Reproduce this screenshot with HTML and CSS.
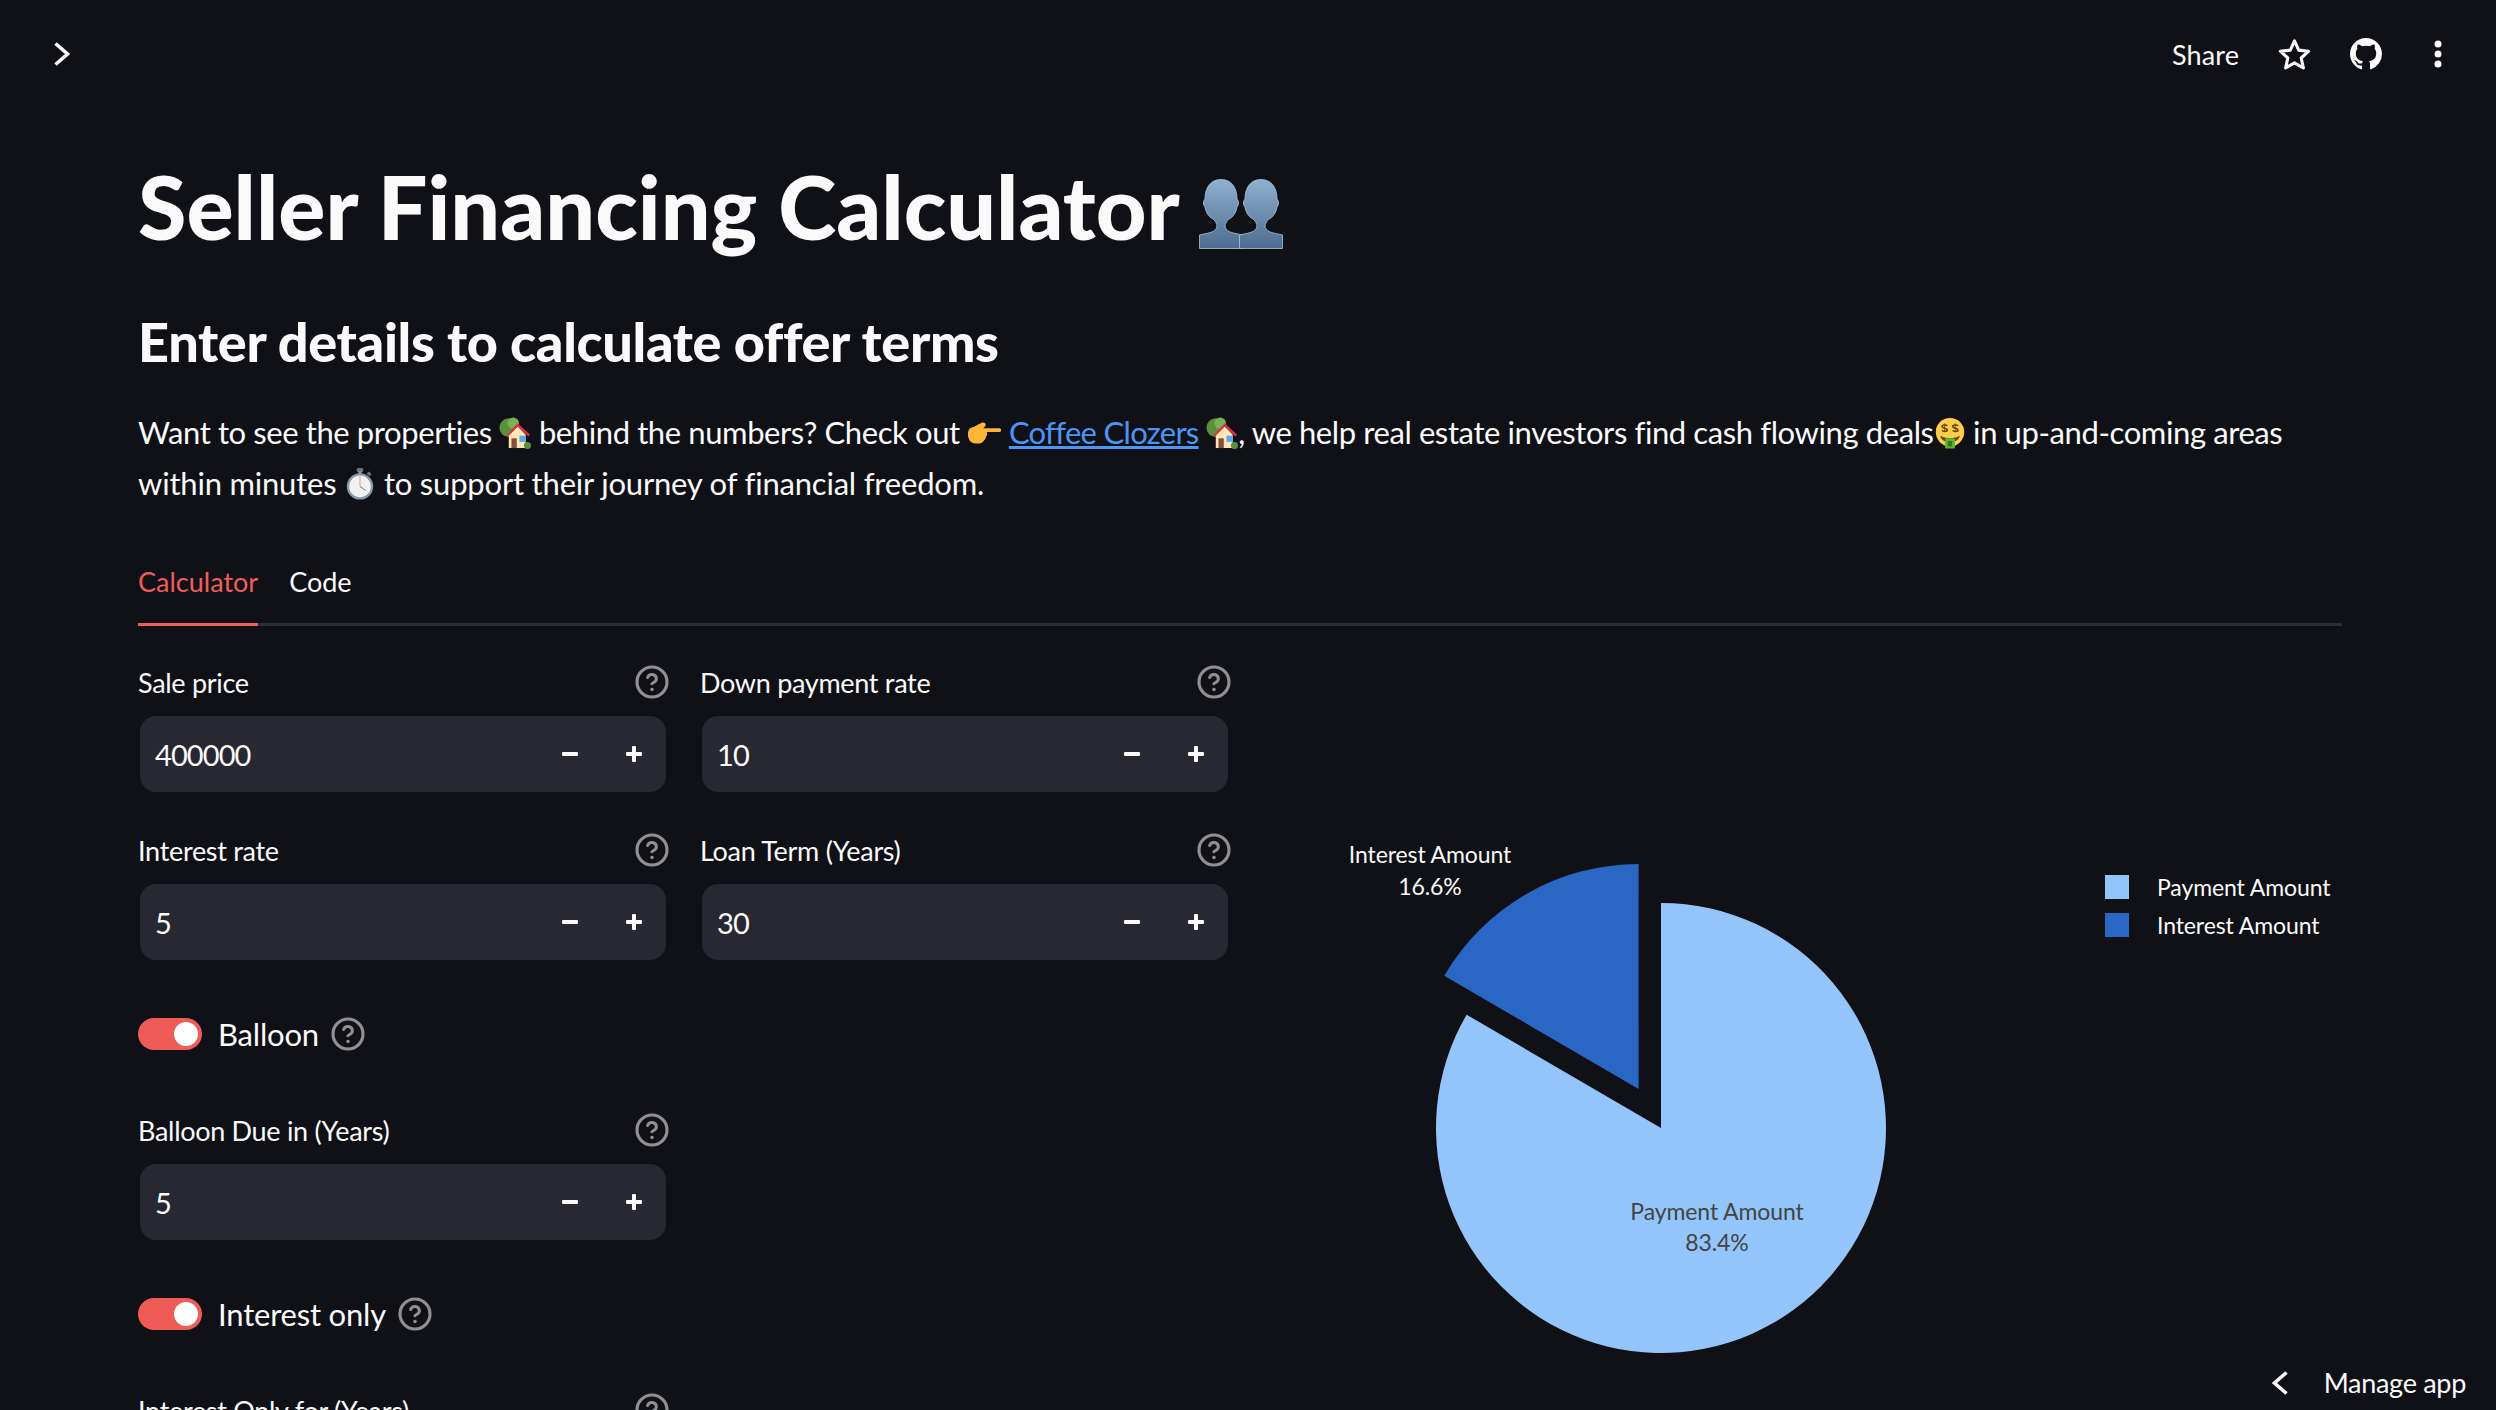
FILE: index.html
```html
<!DOCTYPE html>
<html lang="en">
<head>
  <meta charset="UTF-8" />
  <title>Seller Financing Calculator</title>
  <link rel="stylesheet" href="styles.css">
</head>
<body>
  <!-- shared icons -->
  <svg class="defs" aria-hidden="true">
    <symbol id="help" viewBox="0 0 24 24">
      <circle cx="12" cy="12" r="10" fill="none" stroke="currentColor" stroke-width="2.1"/>
      <path d="M9.09 9a3 3 0 0 1 5.830 1c0 2-3 2.600-3 3.200" fill="none" stroke="currentColor" stroke-width="2" stroke-linecap="round"/>
      <circle cx="12" cy="17" r="1.200" fill="currentColor"/>
    </symbol>
    <symbol id="minus" viewBox="0 0 18 18"><rect x="1" y="7" width="16" height="4" rx="1" fill="currentColor"/></symbol>
    <symbol id="plus" viewBox="0 0 18 18"><rect x="1" y="7" width="16" height="4" rx="1" fill="currentColor"/><rect x="7" y="1" width="4" height="16" rx="1" fill="currentColor"/></symbol>
    <symbol id="house" viewBox="0 0 36 36">
      <circle cx="11" cy="12" r="10.500" fill="#5c913b"/>
      <circle cx="16" cy="7" r="6.500" fill="#77b255"/>
      <path d="M11 20l10-10 9 10v15H11z" fill="#ffe8b6"/>
      <path d="M8 21L21 7l14 13-2 2-12-11-11 11z" fill="#dd2e44"/>
      <rect x="14" y="24" width="6" height="11" fill="#8a4b38"/>
      <rect x="23" y="21" width="7" height="7" fill="#55acee"/>
      <circle cx="32" cy="32" r="4" fill="#5c913b"/>
    </symbol>
    <symbol id="point" viewBox="0 0 36 24">
      <path d="M1 13c0-5 3-7 7-8l8-4c3-1 5 2 3 4l-2 2h17c3 0 3 4 0 4H21c1 2 0 4-1 5 0 2-1 3-2 4-1 2-3 3-5 3H9c-5 0-8-4-8-10z" fill="#ffb636"/>
    </symbol>
    <symbol id="money" viewBox="0 0 36 36">
      <circle cx="18" cy="17" r="16" fill="#ffcc4d"/>
      <path d="M7 21c3 2 7 2.500 11 2.500S26 23 29 21c-1 5-5 7-11 7s-10-2-11-7z" fill="#664500"/>
      <rect x="12.500" y="24" width="11" height="11.500" rx="1" fill="#5cb531"/>
      <rect x="15.500" y="27" width="5" height="6" fill="#2f7d1a"/>
      <path d="M12 7v10M24 7v10" stroke="#a56a1a" stroke-width="1.300"/>
      <path d="M15 10c-1-1.500-6-1.500-6 .7s6 1.600 6 3.800-5 2-6 .5M27 10c-1-1.500-6-1.500-6 .7s6 1.600 6 3.800-5 2-6 .5" fill="none" stroke="#664500" stroke-width="1.800"/>
    </symbol>
    <symbol id="watch" viewBox="0 0 36 40">
      <rect x="14" y="0" width="8" height="5" rx="1.500" fill="#66757f"/>
      <rect x="16" y="4" width="4" height="4" fill="#8899a6"/>
      <rect x="27" y="5" width="5" height="4" rx="1" transform="rotate(40 29 7)" fill="#66757f"/>
      <circle cx="18" cy="23" r="16.500" fill="#8899a6"/>
      <circle cx="18" cy="23" r="13.500" fill="#f1f2f4"/>
      <path d="M18 10v13" stroke="#f0a988" stroke-width="1.500"/>
      <path d="M18 23l7 5" stroke="#66757f" stroke-width="1.200"/>
    </symbol>
    <symbol id="bust" viewBox="0 0 44 70">
      <path d="M.5 56C8 54 16 54 18 48c0-4-2-6-4-8-4-2-7-6-8-12-2-2-2-6 0-8C6 8 12 .5 22 .5S38 8 38 20c2 2 2 6 0 8-1 6-4 10-8 12-2 2-4 4-4 8 2 6 10 6 17.500 8v13.500H.5z" fill="url(#bust-fill)" stroke="#a9c4dc" stroke-width=".8"/>
    </symbol>
    <defs><linearGradient id="bust-fill" x1="0" y1="0" x2="0" y2="1"><stop offset="0" stop-color="#8fb0d0"/><stop offset="1" stop-color="#4d6b8e"/></linearGradient></defs>
  </svg>

  <header class="topbar">
    <svg class="collapse" viewBox="0 0 16 24"><path d="M1.500 1.500L13.500 12l-12 10.500" fill="none" stroke="currentColor" stroke-width="3.600"/></svg>
    <div class="topbar-actions">
      <span class="share">Share</span>
      <svg class="star" viewBox="0 0 32 32"><path d="M16 3.500l3.800 8.500 9.200 1-6.900 6.200 2 9.100-8.100-4.700-8.100 4.700 2-9.100L3 13l9.200-1z" fill="none" stroke="currentColor" stroke-width="2.800" stroke-linejoin="round"/></svg>
      <svg class="github" viewBox="0 0 16 16"><path fill="currentColor" d="M8 0C3.580 0 0 3.580 0 8c0 3.540 2.290 6.530 5.470 7.590.4.07.55-.17.55-.38 0-.19-.01-.82-.01-1.490-2.010.37-2.530-.49-2.690-.94-.09-.23-.48-.94-.82-1.130-.28-.15-.68-.52-.01-.53.63-.01 1.080.58 1.230.82.72 1.210 1.870.87 2.330.66.07-.52.28-.87.51-1.070-1.780-.2-3.640-.89-3.640-3.950 0-.87.31-1.590.82-2.150-.08-.2-.36-1.020.08-2.120 0 0 .67-.21 2.200.82.64-.18 1.320-.27 2-.27.68 0 1.360.09 2 .27 1.530-1.040 2.200-.82 2.200-.82.44 1.100.16 1.920.08 2.120.51.56.82 1.270.82 2.150 0 3.070-1.870 3.750-3.650 3.950.29.25.54.73.54 1.480 0 1.070-.01 1.930-.01 2.200 0 .21.15.46.55.38A8.013 8.013 0 0016 8c0-4.420-3.580-8-8-8z"/></svg>
      <svg class="kebab" viewBox="0 0 8 28"><circle cx="4" cy="4" r="3.500" fill="currentColor"/><circle cx="4" cy="14" r="3.500" fill="currentColor"/><circle cx="4" cy="24" r="3.500" fill="currentColor"/></svg>
    </div>
  </header>

  <main class="main">
    <h1 class="title">Seller Financing Calculator
      <span class="busts"><svg class="bust"><use href="#bust"/></svg><svg class="bust bust-back"><use href="#bust"/></svg></span>
    </h1>
    <h2 class="subtitle">Enter details to calculate offer terms</h2>
    <p class="intro">Want to see the properties <svg class="emoji"><use href="#house"/></svg> behind the numbers? Check out <svg class="emoji emoji-wide"><use href="#point"/></svg> <a href="#">Coffee Clozers</a> <svg class="emoji"><use href="#house"/></svg>, we help real estate investors find cash flowing deals<svg class="emoji"><use href="#money"/></svg> in up-and-coming areas<br><span class="intro-tail">within minutes <svg class="emoji"><use href="#watch"/></svg> to support their journey of financial freedom.</span></p>

    <nav class="tabs">
      <span class="tab active">Calculator</span>
      <span class="tab">Code</span>
    </nav>

    <section class="calc">
      <div class="col">
        <div class="field">
          <div class="field-label"><span>Sale price</span><svg class="help"><use href="#help"/></svg></div>
          <div class="stepper"><span class="value">400000</span><svg class="step"><use href="#minus"/></svg><svg class="step"><use href="#plus"/></svg></div>
        </div>
        <div class="field">
          <div class="field-label"><span>Interest rate</span><svg class="help"><use href="#help"/></svg></div>
          <div class="stepper"><span class="value">5</span><svg class="step"><use href="#minus"/></svg><svg class="step"><use href="#plus"/></svg></div>
        </div>
        <div class="toggle"><span class="switch"></span><span>Balloon</span><svg class="help"><use href="#help"/></svg></div>
        <div class="field">
          <div class="field-label"><span>Balloon Due in (Years)</span><svg class="help"><use href="#help"/></svg></div>
          <div class="stepper"><span class="value">5</span><svg class="step"><use href="#minus"/></svg><svg class="step"><use href="#plus"/></svg></div>
        </div>
        <div class="toggle"><span class="switch"></span><span>Interest only</span><svg class="help"><use href="#help"/></svg></div>
        <div class="field">
          <div class="field-label"><span>Interest Only for (Years)</span><svg class="help"><use href="#help"/></svg></div>
        </div>
      </div>

      <div class="col">
        <div class="field">
          <div class="field-label"><span>Down payment rate</span><svg class="help"><use href="#help"/></svg></div>
          <div class="stepper"><span class="value">10</span><svg class="step"><use href="#minus"/></svg><svg class="step"><use href="#plus"/></svg></div>
        </div>
        <div class="field">
          <div class="field-label"><span>Loan Term (Years)</span><svg class="help"><use href="#help"/></svg></div>
          <div class="stepper"><span class="value">30</span><svg class="step"><use href="#minus"/></svg><svg class="step"><use href="#plus"/></svg></div>
        </div>
      </div>

      <svg class="chart" viewBox="1262 664 1080 746">
        <path d="M1661 1128V903A225 225 0 1 1 1466.600 1014.700Z" fill="#93c5fa"/>
        <path d="M1638.600 1089V864A225 225 0 0 0 1444.200 975.700Z" fill="#2a66c3"/>
        <text class="pie-label" x="1430" y="863">Interest Amount</text>
        <text class="pie-label" x="1430" y="895">16.6%</text>
        <text class="pie-label dark" x="1717" y="1220">Payment Amount</text>
        <text class="pie-label dark" x="1717" y="1251">83.4%</text>
        <rect x="2105" y="875" width="24" height="24" fill="#93c5fa"/>
        <rect x="2105" y="913" width="24" height="24" fill="#2a66c3"/>
        <text class="legend-label" x="2157" y="896">Payment Amount</text>
        <text class="legend-label" x="2157" y="934">Interest Amount</text>
      </svg>
    </section>
  </main>

  <div class="manage">
    <svg class="manage-chevron" viewBox="0 0 16 24"><path d="M14.500 1.500L2.500 12l12 10.500" fill="none" stroke="currentColor" stroke-width="3.600"/></svg>
    <span>Manage app</span>
  </div>
</body>
</html>
```

FILE: styles.css
```css
* {
  box-sizing: border-box;
}
html, body {
  margin: 0;
  height: 100%;
  overflow: hidden;
}
body {
  background: #101117;
  color: #fafafa;
  font-family: "Lato", "Noto Sans", sans-serif;
  font-size: 31px;
  letter-spacing: -0.4px;
}
.defs {
  position: absolute;
  width: 0;
  height: 0;
}

/* top bar */
.topbar {
  height: 108px;
  display: flex;
  justify-content: space-between;
  align-items: flex-start;
  padding: 32px 54px 0 54px;
}
.collapse {
  width: 16px;
  height: 24px;
  margin-top: 10px;
}
.topbar-actions {
  display: flex;
  align-items: center;
  height: 44px;
}
.share {
  font-size: 27px;
  letter-spacing: 0.1px;
}
.star {
  width: 35px;
  height: 35px;
  margin-left: 38px;
}
.github {
  width: 32px;
  height: 32px;
  margin-left: 38px;
}
.kebab {
  width: 8px;
  height: 28px;
  margin-left: 52px;
}

/* headings */
.main {
  padding: 0 154px 0 138px;
}
.title {
  margin: 48px 0 0;
  font-size: 88px;
  line-height: 100px;
  font-weight: 900;
  letter-spacing: 0;
  white-space: nowrap;
}
.busts {
  display: inline-flex;
  vertical-align: -9px;
}
.bust {
  width: 44px;
  height: 70px;
}
.bust-back {
  margin-left: -4px;
}
.subtitle {
  margin: 51px 0 0;
  font-size: 54px;
  line-height: 70px;
  font-weight: 900;
  letter-spacing: -0.35px;
}
.intro {
  margin: 30px 0 0;
  line-height: 51px;
}
.intro a {
  color: #4a96f5;
  letter-spacing: -0.7px;
}
.intro-tail {
  letter-spacing: -0.2px;
}
.emoji {
  width: 32px;
  height: 32px;
  vertical-align: -5px;
}
.emoji-wide {
  width: 34px;
  height: 24px;
  vertical-align: -1px;
}

/* tabs */
.tabs {
  margin-top: 53px;
  display: flex;
  gap: 31px;
  border-bottom: 3px solid #2b2c35;
  height: 64px;
  font-size: 27px;
  letter-spacing: 0;
}
.tab {
  line-height: 40px;
  height: 64px;
}
.tab.active {
  color: #f25c58;
  border-bottom: 3px solid #f25c58;
}

/* form */
.calc {
  margin-top: 38px;
  display: flex;
  gap: 32px;
  align-items: flex-start;
}
.col {
  width: 530px;
  flex: none;
}
.field {
  margin-bottom: 40px;
}
.field-label {
  display: flex;
  justify-content: space-between;
  align-items: center;
  height: 36px;
  margin-bottom: 16px;
  font-size: 27px;
  letter-spacing: -0.3px;
}
.field-label .help {
  margin-right: -2px;
}
.help {
  width: 36px;
  height: 36px;
  color: rgba(250, 250, 250, 0.55);
}
.stepper {
  margin: 0 2px;
  height: 76px;
  border-radius: 16px;
  background: #272831;
  display: flex;
  align-items: center;
  padding: 0 23px 0 15px;
  gap: 46px;
}
.value {
  flex: 1;
  font-size: 29px;
  letter-spacing: -0.9px;
}
.step {
  width: 18px;
  height: 18px;
}
.toggle {
  margin: 58px 0 62px;
  height: 32px;
  display: flex;
  align-items: center;
  letter-spacing: -0.2px;
}
.toggle .help {
  margin-left: 11px;
}
.switch {
  width: 64px;
  height: 32px;
  margin-right: 16px;
  border-radius: 16px;
  background: #ef5b57;
  display: flex;
  align-items: center;
  justify-content: flex-end;
  padding-right: 4px;
}
.switch::after {
  content: "";
  width: 24px;
  height: 24px;
  border-radius: 50%;
  background: #fff;
}

/* chart */
.chart {
  width: 1080px;
  height: 746px;
  flex: none;
}
.pie-label {
  font-size: 23px;
  letter-spacing: -0.1px;
  fill: #fafafa;
  text-anchor: middle;
}
.pie-label.dark {
  fill: #444;
}
.legend-label {
  font-size: 23px;
  letter-spacing: -0.1px;
  fill: #fafafa;
}

/* bottom right badge */
.manage {
  position: absolute;
  right: 30px;
  bottom: 11px;
  display: flex;
  align-items: center;
  gap: 36px;
  font-size: 27px;
  letter-spacing: -0.3px;
  color: #fafafa;
}
.manage-chevron {
  width: 16px;
  height: 24px;
}
```
